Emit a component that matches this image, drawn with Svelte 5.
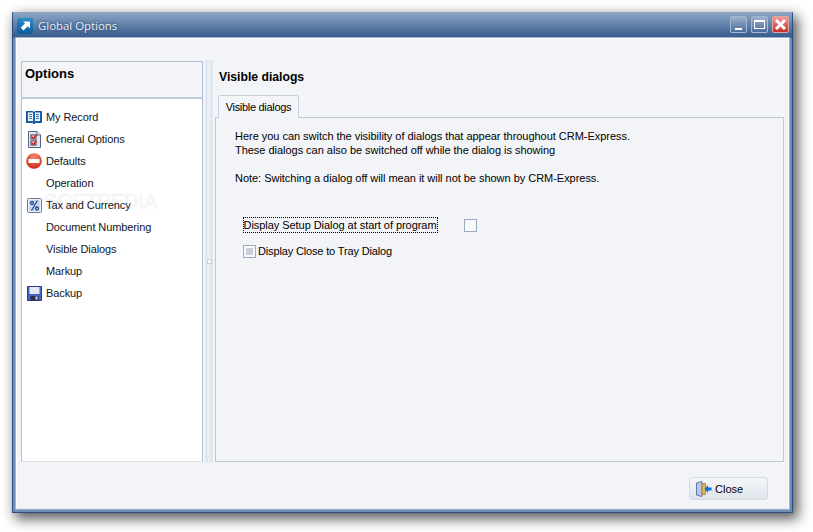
<script lang="ts">
    const navItems = [
        { text: 'My Record', icon: 'book' },
        { text: 'General Options', icon: 'form' },
        { text: 'Defaults', icon: 'stop' },
        { text: 'Operation', icon: '' },
        { text: 'Tax and Currency', icon: 'percent' },
        { text: 'Document Numbering', icon: '' },
        { text: 'Visible Dialogs', icon: '' },
        { text: 'Markup', icon: '' },
        { text: 'Backup', icon: 'disk' }
    ]
</script>

<div class="page">
    <div class="window">
        <header class="titlebar">
            <svg width="16" height="16" viewBox="0 0 16 16">
                <defs>
                    <linearGradient id="appBg" x1="0" y1="0" x2="0" y2="1">
                        <stop offset="0" stop-color="#2a8cc8" />
                        <stop offset="1" stop-color="#0d5c9c" />
                    </linearGradient>
                </defs>
                <rect width="16" height="16" rx="2" fill="url(#appBg)" />
                <path d="M6 3.500h7v7l-2.300-2.300L6.500 12.600 3.600 9.700 8 5.600z" fill="#fff" />
            </svg>
            <span class="title">Global Options</span>
            <div class="controls">
                <button type="button" class="ctl" aria-label="Minimize"><span class="min"></span></button>
                <button type="button" class="ctl" aria-label="Maximize"><span class="max"></span></button>
                <button type="button" class="ctl close-x" aria-label="Close">
                    <svg width="13" height="13" viewBox="0 0 13 13">
                        <path d="M2 2l9 9M11 2l-9 9" stroke="#fff" stroke-width="3" />
                    </svg>
                </button>
            </div>
        </header>

        <div class="client">
            <div class="main">
                <aside class="sidebar">
                    <div class="side-head">Options</div>
                    <span class="watermark">SOFTPEDIA</span>
                    <ul class="nav">
                        {#each navItems as item}
                            <li>
                                <span class="nav-icon">
                                    {#if item.icon === 'book'}
                                        <svg width="16" height="15" viewBox="0 0 16 15">
                                            <path d="M.5 1.500h6.500L8 2.500l1-1h6.500v11H9.500L8 14l-1.500-1.500H.5z" fill="#1c66b4" stroke="#17508f" />
                                            <path d="M2 2.500h5v8.500H2zM9 2.500h5v8.500H9z" fill="#eef4fc" />
                                            <path d="M3 4.500h3M3 6.500h3M3 8.500h3M10 4.500h3M10 6.500h3M10 8.500h3" stroke="#3b78bb" />
                                        </svg>
                                    {:else if item.icon === 'form'}
                                        <svg width="13" height="17" viewBox="0 0 13 17">
                                            <path d="M.5.500H9L12.500 4v12.500H.5z" fill="#dfe6f2" stroke="#56657e" />
                                            <path d="M9 .500V4h3.500" fill="#fff" stroke="#56657e" />
                                            <rect x="3" y="4" width="5" height="4" fill="#fff" stroke="#3a3a50" />
                                            <rect x="3" y="10" width="5" height="4" fill="#fff" stroke="#3a3a50" />
                                            <path d="M3.500 5.500l2 2 3-4M3.500 11.500l2 2 3-4" fill="none" stroke="#d22020" stroke-width="1.500" />
                                        </svg>
                                    {:else if item.icon === 'stop'}
                                        <svg width="16" height="16" viewBox="0 0 16 16">
                                            <defs>
                                                <radialGradient id="stopBg" cx="0.5" cy="0.25" r="0.85">
                                                    <stop offset="0" stop-color="#f98a68" />
                                                    <stop offset="1" stop-color="#c41d0a" />
                                                </radialGradient>
                                            </defs>
                                            <circle cx="8" cy="8" r="7.800" fill="url(#stopBg)" />
                                            <rect x="2.500" y="6" width="11" height="4" fill="#fff" />
                                        </svg>
                                    {:else if item.icon === 'percent'}
                                        <svg width="15" height="15" viewBox="0 0 15 15">
                                            <rect x=".5" y=".5" width="14" height="14" rx="1.500" fill="#c9daf1" stroke="#6c7a90" />
                                            <rect x="1.500" y="1.500" width="12" height="12" fill="none" stroke="#eef3fb" />
                                            <circle cx="5" cy="5" r="1.500" fill="none" stroke="#1f4f8e" stroke-width="1.300" />
                                            <circle cx="10" cy="10.500" r="1.500" fill="none" stroke="#1f4f8e" stroke-width="1.300" />
                                            <path d="M10.500 2.500l-6 10" stroke="#1f4f8e" stroke-width="1.300" />
                                        </svg>
                                    {:else if item.icon === 'disk'}
                                        <svg width="15" height="15" viewBox="0 0 15 15">
                                            <path d="M.5.500h14v14H.5z" fill="#4a63c0" stroke="#2b3c88" />
                                            <rect x="2.500" y="1" width="10" height="7" fill="#e4e9f5" />
                                            <rect x="3.500" y="10" width="8" height="4.500" fill="#2a2f48" />
                                            <rect x="8.500" y="10.500" width="2" height="3" fill="#d8dcea" />
                                        </svg>
                                    {/if}
                                </span>
                                <span>{item.text}</span>
                            </li>
                        {/each}
                    </ul>
                </aside>

                <div class="splitter"><span class="grip"></span></div>

                <section class="content">
                    <h2>Visible dialogs</h2>
                    <div class="tabs"><span class="tab">Visible dialogs</span></div>
                    <div class="tab-panel">
                        <p>Here you can switch the visibility of dialogs that appear throughout CRM-Express.<br />These dialogs can also be switched off while the dialog is showing</p>
                        <p class="note">Note: Switching a dialog off will mean it will not be shown by CRM-Express.</p>
                        <div class="option-a">
                            <span class="focus-label">Display Setup Dialog at start of program</span>
                            <span class="check"></span>
                        </div>
                        <div class="option-b">
                            <span class="check"><span class="dot"></span></span>
                            <span>Display Close to Tray Dialog</span>
                        </div>
                    </div>
                </section>
            </div>

            <footer class="footer">
                <button type="button" class="close-btn">
                    <svg width="16" height="16" viewBox="0 0 16 16">
                        <path d="M.5 2L6 .5v15L.5 14z" fill="#b9c6ea" stroke="#6a77a8" />
                        <path d="M6 2.500h3.500v11H6z" fill="#e0b458" stroke="#9a7a30" stroke-width=".7" />
                        <path d="M15.500 6.500H12V4L8.500 8 12 12V9.500h3.500z" fill="#0f6fd8" />
                    </svg>
                    <span>Close</span>
                </button>
            </footer>
        </div>
    </div>
</div>

<style>
:global(body) {
    margin: 0;
    background: #fff;
}

.page {
    width: 813px;
    height: 532px;
    padding: 12px 20px 19px 12px;
    box-sizing: border-box;
    font-family: "Liberation Sans", Arial, sans-serif;
    font-size: 11px;
    color: #000;
}

.window {
    height: 100%;
    display: flex;
    flex-direction: column;
    box-sizing: border-box;
    border: 1px solid #2c4f80;
    border-top-color: #8aa4c4;
    background: linear-gradient(#8ba4c3, #33598c 25px, #6d8db4 25px);
    box-shadow: 4px 5px 12px 1px rgba(0, 0, 0, 0.65);
}

.titlebar {
    height: 25px;
    flex: none;
    display: flex;
    align-items: center;
    padding: 0 3px 0 4px;
    gap: 5px;
}

.title {
    color: #e8eef6;
    font-family: "Open Sans", "Liberation Sans", sans-serif;
    font-size: 11.4px;
    text-shadow: 0 0 3px #1c3560;
}

.controls {
    margin-left: auto;
    display: flex;
    gap: 4px;
    margin-top: -2px;
}

.ctl {
    width: 17px;
    height: 17px;
    padding: 0;
    display: flex;
    align-items: center;
    justify-content: center;
    border: 1px solid #a5b8d2;
    border-radius: 2px;
    background: linear-gradient(#9db1cb, #486d9c);
}

.close-x {
    border-color: #e6a3a3;
    background: linear-gradient(#ef9c9c, #c92c2c);
}

.min {
    width: 7px;
    height: 2px;
    margin-top: 9px;
    background: #fff;
}

.max {
    width: 9px;
    height: 6px;
    border: 1px solid #fff;
    border-top-width: 2px;
}

.client {
    flex: 1;
    display: flex;
    flex-direction: column;
    min-height: 0;
    margin: 0 3px 3px;
    background: #f3f4f7;
    border: 1px solid #fff;
    border-bottom-color: #dfe4ec;
    box-shadow: 0 0 0 1px #9fb2cc;
}

.main {
    flex: 1;
    display: flex;
    min-height: 0;
    padding: 22px 4px 0 4px;
}

.sidebar {
    width: 182px;
    height: 401px;
    flex: none;
    box-sizing: border-box;
    display: flex;
    flex-direction: column;
    position: relative;
    border: 1px solid #b0c0d6;
    border-bottom-color: #dde2ea;
    background: #fff;
}

.side-head {
    height: 37px;
    flex: none;
    padding: 4px 3px 0;
    box-sizing: border-box;
    background: #f3f4f7;
    border-bottom: 2px solid #c0cddd;
    font-size: 13px;
    font-weight: bold;
}

.watermark {
    position: absolute;
    left: 22px;
    top: 128px;
    color: transparent;
    -webkit-text-stroke: 1px #f3f3f3;
    font-size: 20px;
    white-space: nowrap;
}

.nav {
    list-style: none;
    margin: 0;
    padding: 7px 0 0;
    position: relative;
}

.nav li {
    height: 22px;
    display: flex;
    align-items: center;
    gap: 2px;
    color: #11151d;
    letter-spacing: -0.1px;
}

.nav-icon {
    width: 20px;
    margin-left: 2px;
    display: flex;
    align-items: center;
    justify-content: center;
}

.splitter {
    width: 8px;
    height: 403px;
    flex: none;
    margin: -1px 2px 0 2px;
    box-sizing: border-box;
    display: flex;
    align-items: center;
    justify-content: center;
    background: linear-gradient(90deg, #dbe3ee, #eef2f7 50%, #dbe3ee);
    border: 1px solid #e3e9f1;
}

.grip {
    width: 5px;
    height: 5px;
    background: #fff;
    border: 1px solid #c5d0df;
    box-sizing: border-box;
}

.content {
    flex: 1;
    min-width: 0;
    display: flex;
    flex-direction: column;
}

h2 {
    margin: 0;
    padding: 9px 0 0 4px;
    height: 34px;
    flex: none;
    box-sizing: border-box;
    font-size: 12.2px;
    font-weight: bold;
}

.tabs {
    height: 23px;
    flex: none;
    padding-left: 3px;
    display: flex;
    position: relative;
    z-index: 1;
}

.tab {
    width: 81px;
    height: 23px;
    box-sizing: border-box;
    display: flex;
    align-items: center;
    justify-content: center;
    background: #f4f5f8;
    border: 1px solid #c6d1e0;
    border-bottom: none;
    border-radius: 3px 3px 0 0;
    letter-spacing: -0.3px;
}

.tab-panel {
    width: 569px;
    height: 345px;
    margin-top: -1px;
    padding: 11px 19px;
    box-sizing: border-box;
    border: 1px solid #bcc9da;
    line-height: 14px;
}

p {
    margin: 0;
    letter-spacing: -0.03px;
}

.note {
    margin-top: 14px;
}

.option-a {
    margin: 33px 0 0 8.500px;
    display: flex;
    align-items: center;
    gap: 27px;
}

.focus-label {
    outline: 1px dotted #000;
    letter-spacing: -0.05px;
}

.option-b {
    margin: 12px 0 0 8px;
    display: flex;
    align-items: center;
    gap: 2px;
    letter-spacing: -0.15px;
}

.check {
    width: 13px;
    height: 13px;
    box-sizing: border-box;
    display: flex;
    align-items: center;
    justify-content: center;
    border: 1px solid #9aacc4;
    background: #f8f9fb;
}

.dot {
    width: 7px;
    height: 7px;
    background: #c9d0dc;
}

.footer {
    height: 46px;
    flex: none;
    display: flex;
    justify-content: flex-end;
    padding: 15px 20px 0 0;
    box-sizing: border-box;
}

.close-btn {
    width: 79px;
    height: 23px;
    padding: 0 0 0 6px;
    display: flex;
    align-items: center;
    gap: 3px;
    border: 1px solid #d6dce6;
    border-radius: 3px;
    background: linear-gradient(#f5f6f9, #dfe4ec);
    font: inherit;
    color: #000;
}
</style>
